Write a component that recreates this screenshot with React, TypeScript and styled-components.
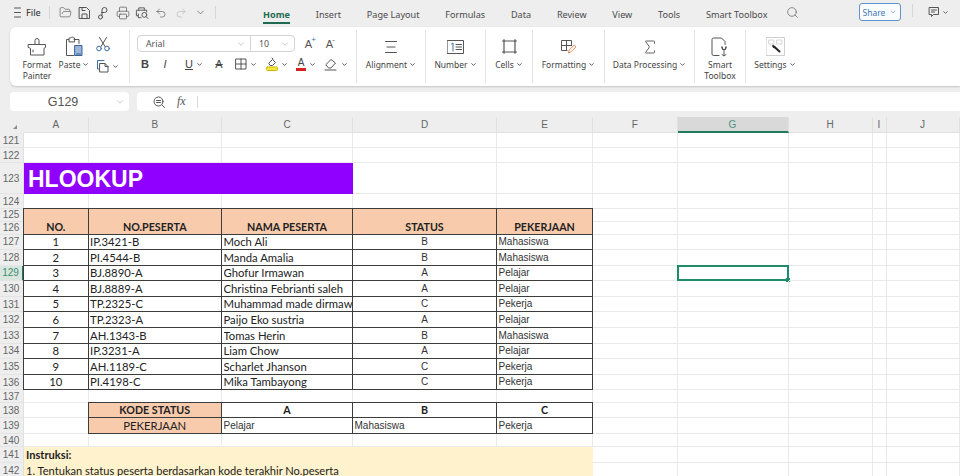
import React from "react";
import styled, { createGlobalStyle } from "styled-components";
import { ChevronDown, FolderOpen, Printer, Search, Sigma, Undo2, Redo2 } from "lucide-react";

const UI_FONT = `"Noto Sans", "Open Sans", sans-serif`;
const GRID_LINE = "#e9e9e9";
const DARK_LINE = "#3c3c3c";

const Global = createGlobalStyle`
  html, body { margin: 0; padding: 0; height: 476px; overflow: hidden; background: #eeeeee; }
  * { box-sizing: border-box; }
`;

const Page = styled.div`
  width: 960px;
  height: 476px;
  overflow: hidden;
  display: flex;
  flex-direction: column;
  font-family: ${UI_FONT};
  color: #444;
`;

/* ---------- top bar ---------- */
const TopBar = styled.div`
  height: 27px;
  flex: none;
  display: flex;
  align-items: center;
  padding-left: 14px;
`;

const FileBtn = styled.div`
  display: flex;
  align-items: center;
  gap: 5px;
  width: 35px;
  font-size: 9px;
  font-weight: 500;
  margin-bottom: 3px;
`;

const VLine = styled.span<{ $gap: number }>`
  width: 1px;
  height: 13px;
  margin: 0 ${(p) => p.$gap}px 3px;
  background: #d6d6d6;
  flex: none;
`;

const QuickIcons = styled.div`
  display: flex;
  align-items: center;
  gap: 5.3px;
  margin: 0 0 2px 8px;
  color: #555;
`;

const QuickSlot = styled.span<{ $faint?: boolean }>`
  display: flex;
  width: 14px;
  justify-content: center;
  color: ${(p) => (p.$faint ? "#b5b5b5" : "#555")};
`;

const Tabs = styled.div`
  display: flex;
  align-items: center;
  height: 27px;
  margin-left: 39px;
  gap: 25.8px;
`;

const Tab = styled.div<{ $active?: boolean }>`
  font-size: 9.1px;
  line-height: 21px;
  height: 20px;
  white-space: nowrap;
  color: ${(p) => (p.$active ? "#1e6b52" : "#4a4a4a")};
  font-weight: ${(p) => (p.$active ? 700 : 400)};
  border-bottom: ${(p) => (p.$active ? "2px solid #1e6b52" : "2px solid transparent")};
`;

const SearchSlot = styled.span`
  display: flex;
  margin: 0 0 3px -7px;
  color: #555;
`;

const TopRight = styled.div`
  margin-left: auto;
  display: flex;
  align-items: center;
  margin-bottom: 3px;
`;

const ShareBtn = styled.div`
  width: 42px;
  height: 18px;
  border: 1px solid #5f93c9;
  border-radius: 3px;
  background: #fbfcfe;
  color: #3d78b5;
  font-size: 8.5px;
  display: flex;
  align-items: center;
  justify-content: center;
  gap: 4px;
`;

const CommentBtn = styled.div`
  display: flex;
  align-items: center;
  gap: 2px;
  width: 36px;
  padding-left: 4px;
  color: #555;
`;

/* ---------- ribbon ---------- */
const Ribbon = styled.div`
  height: 59px;
  flex: none;
  margin-left: 10px;
  padding: 3px 0;
  background: #fff;
  border-radius: 6px 0 0 6px;
  box-shadow: 0 1px 2px rgba(0, 0, 0, 0.18);
  display: flex;
`;

const Group = styled.div<{ $w: number; $last?: boolean; $pad?: number }>`
  width: ${(p) => p.$w}px;
  flex: none;
  display: flex;
  position: relative;
  padding-left: ${(p) => p.$pad || 0}px;
  border-right: ${(p) => (p.$last ? "none" : "1px solid #e4e4e4")};
`;

const BigTool = styled.div<{ $w?: number }>`
  width: ${(p) => (p.$w ? `${p.$w}px` : "100%")};
  display: flex;
  flex-direction: column;
  align-items: center;
  padding-top: 5px;
  flex: none;
`;

const IconBox = styled.div`
  height: 23px;
  display: flex;
  align-items: center;
  justify-content: center;
`;

const Label = styled.div`
  font-size: 8.5px;
  line-height: 11px;
  margin-top: 1px;
  text-align: center;
  white-space: nowrap;
  color: #3f3f3f;
  display: flex;
  flex-direction: column;
  align-items: center;
`;

const LabelLine = styled.span`
  display: flex;
  align-items: center;
  height: 11px;
`;

const Caret = styled.span`
  display: flex;
  margin-left: 2px;
  color: #444;
`;

const SmallStack = styled.div`
  display: flex;
  flex-direction: column;
  align-items: flex-start;
  padding-top: 7px;
`;

const CutSlot = styled.span`
  display: flex;
  margin-left: 10px;
`;

const CopySlot = styled.span`
  display: flex;
  align-items: center;
  margin: 7px 0 0 10px;
`;

const FontPanel = styled.div`
  display: flex;
  flex-direction: column;
  padding: 5px 0 0 7px;
`;

const FontTop = styled.div`
  display: flex;
  align-items: center;
`;

const FontBox = styled.div`
  width: 158px;
  height: 17px;
  border: 1px solid #d4d4d4;
  border-radius: 4px;
  display: flex;
  font-size: 8.8px;
  color: #444;
`;

const FontField = styled.div<{ $w: number; $divide?: boolean }>`
  width: ${(p) => p.$w}px;
  display: flex;
  align-items: center;
  justify-content: space-between;
  padding: 0 4px 0 8px;
  border-right: ${(p) => (p.$divide ? "1px solid #d4d4d4" : "none")};
  color: #555;
`;

const SizeBtn = styled.span<{ $first?: boolean }>`
  font-family: "Liberation Sans", sans-serif;
  font-size: 11px;
  width: 21px;
  margin-left: ${(p) => (p.$first ? "3px" : "0")};
  text-align: center;
  color: #555;
  position: relative;
`;

const SizeMark = styled.sup<{ $blue?: boolean }>`
  position: absolute;
  top: -3px;
  margin-left: -1px;
  font-size: 8px;
  line-height: 10px;
  color: ${(p) => (p.$blue ? "#3a6ea5" : "#555")};
`;

const FormatRow = styled.div`
  display: flex;
  align-items: center;
  height: 18px;
  margin-top: 3px;
`;

const FormatTool = styled.div<{ $w: number }>`
  width: ${(p) => p.$w}px;
  flex: none;
  display: flex;
  align-items: center;
  justify-content: center;
  gap: 3px;
  color: #444;
`;

const FormatLetter = styled.span<{ $kind?: "bold" | "italic" | "under" | "strike" }>`
  font-family: "Liberation Sans", sans-serif;
  font-size: 11px;
  line-height: 13px;
  color: #444;
  font-weight: ${(p) => (p.$kind === "bold" ? 700 : 400)};
  font-style: ${(p) => (p.$kind === "italic" ? "italic" : "normal")};
  text-decoration: ${(p) => (p.$kind === "under" ? "underline" : p.$kind === "strike" ? "line-through" : "none")};
`;

const ColorLetter = styled.span<{ $color: string }>`
  font-family: "Liberation Sans", sans-serif;
  font-size: 10px;
  line-height: 10px;
  color: #444;
  border-bottom: 3px solid ${(p) => p.$color};
  padding: 0 1.5px;
`;

/* ---------- formula bar ---------- */
const FormulaRow = styled.div`
  height: 19px;
  flex: none;
  margin: 6px 0 6px 10px;
  display: flex;
  gap: 8px;
`;

const NameBox = styled.div`
  width: 119px;
  background: #fff;
  border-radius: 4px;
  display: flex;
  align-items: center;
  justify-content: center;
  position: relative;
  font-family: "Liberation Sans", sans-serif;
  font-size: 12.5px;
  color: #555;
  padding-right: 13px;
`;

const NameCaret = styled.span`
  position: absolute;
  right: 4px;
  top: 5px;
  display: flex;
  color: #888;
`;

const FormulaBox = styled.div`
  flex: 1;
  background: #fff;
  border-radius: 4px 0 0 4px;
  display: flex;
  align-items: center;
  padding-left: 16px;
  gap: 12px;
  color: #666;
`;

const Fx = styled.span`
  font-family: "Liberation Serif", serif;
  font-style: italic;
  font-size: 12px;
  width: 14px;
  color: #555;
`;

const FormulaDivider = styled.span`
  width: 1px;
  height: 12px;
  background: #d8d8d8;
  margin-left: -6px;
`;

/* ---------- sheet ---------- */
const Sheet = styled.div`
  flex: 1;
  min-height: 0;
  display: grid;
  grid-template-columns: 24px 64.5px 133.5px 131px 144px 96px 84.5px 111px 84px 14px 73px;
  grid-template-rows: 16px repeat(22, auto);
  align-content: start;
  background: #fff;
`;

const Corner = styled.div`
  background: #eeeeee;
  position: relative;
  &::after {
    content: "";
    position: absolute;
    right: 7px;
    bottom: 4px;
    border-left: 4px solid transparent;
    border-bottom: 4px solid #888;
  }
`;

const ColHead = styled.div<{ $active?: boolean }>`
  background: ${(p) => (p.$active ? "#d9d9d9" : "#eeeeee")};
  color: ${(p) => (p.$active ? "#4f9378" : "#666")};
  font-family: "Liberation Sans", sans-serif;
  font-size: 10px;
  display: flex;
  align-items: center;
  justify-content: center;
  border-right: 1px solid #e0e0e0;
  border-bottom: ${(p) => (p.$active ? "2px solid #217a5b" : "1px solid #e0e0e0")};
`;

const RowHead = styled.div<{ $h: number; $active?: boolean }>`
  height: ${(p) => p.$h}px;
  background: ${(p) => (p.$active ? "#d9e6e0" : "#eeeeee")};
  color: ${(p) => (p.$active ? "#3b8f6f" : "#666")};
  font-family: "Liberation Sans", sans-serif;
  font-size: 10px;
  display: flex;
  align-items: center;
  justify-content: center;
  padding-right: 1px;
  border-bottom: 1px solid #e4e4e4;
  border-right: ${(p) => (p.$active ? "2px solid #217a5b" : "1px solid #e0e0e0")};
`;

const Cell = styled.div<{
  $span?: number;
  $rows?: number;
  $fill?: string;
  $box?: boolean;
  $bold?: boolean;
  $center?: boolean;
  $arial?: boolean;
}>`
  grid-column: span ${(p) => p.$span || 1};
  grid-row: span ${(p) => p.$rows || 1};
  position: relative;
  min-width: 0;
  background: ${(p) => p.$fill || "transparent"};
  border-right: ${(p) => (p.$box ? "none" : `1px solid ${GRID_LINE}`)};
  border-bottom: ${(p) => (p.$box ? "none" : `1px solid ${GRID_LINE}`)};
  display: flex;
  align-items: flex-end;
  justify-content: ${(p) => (p.$center ? "center" : "flex-start")};
  padding: 0 ${(p) => (p.$center ? "1px" : "0")} 1px ${(p) => (p.$center ? "0" : "1.5px")};
  white-space: nowrap;
  font-family: ${(p) => (p.$arial ? `"Liberation Sans", sans-serif` : `Lato, "Open Sans", sans-serif`)};
  font-size: ${(p) => (p.$arial ? "10px" : p.$bold ? "10.7px" : "11.3px")};
  line-height: 14px;
  font-weight: ${(p) => (p.$bold ? 700 : 400)};
  color: ${(p) => (p.$arial ? "#333" : "#222")};
  &::after {
    content: "";
    display: ${(p) => (p.$box ? "block" : "none")};
    position: absolute;
    inset: -1px 0 0 -1px;
    border: 1px solid ${DARK_LINE};
    pointer-events: none;
  }
`;

const Clip = styled.span`
  display: block;
  overflow: hidden;
  width: 100%;
`;

const TitleCell = styled.div`
  grid-column: span 3;
  background: #9000ff;
  color: #fff;
  font-family: "Liberation Sans", sans-serif;
  font-weight: 700;
  font-size: 23px;
  display: flex;
  align-items: center;
  padding: 2px 0 0 4px;
`;

const NoteCell = styled.div<{ $bold?: boolean }>`
  grid-column: span 5;
  background: #fff2cc;
  font-family: Lato, "Open Sans", sans-serif;
  font-size: 11.1px;
  line-height: 14px;
  font-weight: ${(p) => (p.$bold ? 700 : 400)};
  color: #222;
  padding: 1px 0 0 2px;
  display: flex;
  align-items: center;
  white-space: nowrap;
`;

const SelectedCell = styled.div`
  position: relative;
  border-right: 1px solid ${GRID_LINE};
  border-bottom: 1px solid ${GRID_LINE};
  &::before {
    content: "";
    position: absolute;
    inset: -1px -1px -1px -1px;
    border: 2px solid #1e8c68;
  }
  &::after {
    content: "";
    position: absolute;
    right: -2px;
    bottom: -2px;
    width: 4px;
    height: 4px;
    background: #1e8c68;
  }
`;

/* ---------- icons ---------- */
const Svg = styled.svg`
  display: block;
  fill: none;
  stroke: currentColor;
  stroke-width: 1;
  stroke-linecap: round;
  stroke-linejoin: round;
  color: #555;
`;

const Chev = ({ s = 7 }: { s?: number }) => <ChevronDown size={s} strokeWidth={3} />;

const QuickSave = () => (
  <Svg width="13" height="14" viewBox="0 0 13 14">
    <path d="M1.5 1.5h7l3 3v8h-10z" />
    <path d="M4 12.5V8h5v4.5M4 1.5v3h3" />
  </Svg>
);
const QuickPdf = () => (
  <Svg width="13" height="14" viewBox="0 0 13 14">
    <path d="M5 6.5V4a2.5 2.5 0 1 1 2.5 2.5H5zM5 6.5v3" />
    <circle cx="3.5" cy="11" r="2" />
  </Svg>
);
const QuickPreview = () => (
  <Svg width="15" height="14" viewBox="0 0 15 14">
    <path d="M4 4V1.5h6V4M3.5 10H1.5V4h11v2" />
    <path d="M3.5 8v4h3" />
    <circle cx="10" cy="9" r="2.6" />
    <path d="M12 11l2 2" />
  </Svg>
);
const Hamburger = () => (
  <Svg width="7" height="11" viewBox="0 0 7 11">
    <path d="M0.5 1h6M0.5 5.5h6M0.5 10h6" />
  </Svg>
);
const CommentIcon = () => (
  <Svg width="12" height="12" viewBox="0 0 12 12">
    <path d="M1.5 1.5h9v7h-5l-2 2v-2h-2z" />
    <path d="M3.5 4h5M3.5 6h3" />
  </Svg>
);
const PainterIcon = () => (
  <Svg width="20" height="20" viewBox="0 0 20 20">
    <path d="M8 7V3.5a2 2 0 0 1 4 0V7" />
    <path d="M1.5 7.5h17v3l-1.5 .8V18H3.5v-6.7l-2-.8z" />
    <path d="M6 13v2" />
  </Svg>
);
const PasteIcon = () => (
  <Svg width="20" height="21" viewBox="0 0 20 21">
    <path d="M10 3.5H15v4M4.5 3.5H2.5v16H10" />
    <path d="M5 5.5V2h1.8a1.5 1.5 0 0 1 2.8 0h1v3.5z" />
    <rect x="11" y="9.5" width="7" height="10" fill="#9db6d8" stroke="#3a6299" />
    <path d="M12.5 18h4" stroke="#3a6299" />
  </Svg>
);
const CutIcon = () => (
  <Svg width="14" height="15" viewBox="0 0 14 15">
    <path d="M3.5 0.5L9 9.5M10.5 0.5L5 9.5" />
    <circle cx="3" cy="11.5" r="2.3" stroke="#3a6ea5" />
    <circle cx="11" cy="11.5" r="2.3" stroke="#3a6ea5" />
  </Svg>
);
const CopyIcon = () => (
  <Svg width="14" height="14" viewBox="0 0 14 14">
    <path d="M8 1.5H1.5V10h2" stroke="#3a6ea5" />
    <path d="M4 4.5h5l3 3v5.5H4z" />
    <path d="M9 4.5v3h3" />
  </Svg>
);
const BorderIcon = () => (
  <Svg width="12" height="12" viewBox="0 0 12 12">
    <rect x="1" y="1" width="10" height="10" />
    <path d="M6 1v10M1 6h10" />
  </Svg>
);
const EraserIcon = () => (
  <Svg width="14" height="13" viewBox="0 0 14 13">
    <path d="M2 6.5L7 1.5l4.5 3.5-4.5 5H5z" />
    <path d="M1 12h11" />
  </Svg>
);
const BucketLetter = () => (
  <Svg width="12" height="14" viewBox="0 0 12 14">
    <path d="M3 6L6.5 2.5 9.5 5.5 6.5 8.5H4.5z" />
    <path d="M6 1l1 1" />
    <rect x="0.5" y="10" width="11" height="3.5" rx="1" fill="#f5e642" stroke="#c7b900" />
  </Svg>
);
const AlignIcon = () => (
  <Svg width="14" height="14" viewBox="0 0 14 14">
    <path d="M1.5 1.5h11M3 7h8M1.5 12.5h11" />
  </Svg>
);
const NumberIcon = () => (
  <Svg width="17" height="14" viewBox="0 0 17 14">
    <rect x="0.5" y="0.5" width="16" height="13" />
    <path d="M9 4.5h5.5M9 7h5.5M9 9.5h5.5" />
    <path d="M4.5 4L6 3v8" stroke="#3a6ea5" />
  </Svg>
);
const CellsIcon = () => (
  <Svg width="15" height="15" viewBox="0 0 15 15">
    <rect x="2" y="2" width="11" height="11" strokeWidth="1.2" />
    <path d="M2 0.5v1.5M13 0.5v1.5M0.5 2H2M13 2h1.5M0.5 13H2M13 13h1.5M2 13v1.5M13 13v1.5" />
  </Svg>
);
const FormattingIcon = () => (
  <Svg width="17" height="15" viewBox="0 0 17 15">
    <path d="M7 11.5H1.5v-10h10v5M1.5 6.5h10M6.5 1.5v10" />
    <path d="M8.5 13.5l.7-2.5 5-5 1.8 1.8-5 5z" stroke="#d98a5c" />
  </Svg>
);
const SmartIcon = () => (
  <Svg width="18" height="20" viewBox="0 0 18 20">
    <path d="M8 18.5H2.5a1.5 1.5 0 0 1-1.5-1.5V2.5A1.5 1.5 0 0 1 2.5 1h8l3.5 3.5v3" />
    <path d="M11.5 10v2.5h3V10M13 12.5v6M11 17.5l2 1.5 2-1.5" />
    <path d="M10.5 10a2.5 2.5 0 0 0 5 0" />
  </Svg>
);
const SettingsIcon = () => (
  <Svg width="19" height="19" viewBox="0 0 19 19">
    <rect x="0.5" y="0.5" width="18" height="18" stroke="#cfcfcf" />
    <rect x="3" y="3" width="5" height="4" stroke="#d6d6d6" />
    <rect x="11" y="3" width="5" height="4" stroke="#d6d6d6" />
    <path d="M8 9.5l5.5 5" stroke="#222" strokeWidth="2" />
    <path d="M7 8.5a1.7 1.7 0 0 0 2 2" stroke="#222" strokeWidth="1.6" />
  </Svg>
);
const ZoomIcon = () => (
  <Svg width="12" height="12" viewBox="0 0 12 12">
    <circle cx="5.5" cy="5.5" r="4.5" />
    <path d="M9 9l2.5 2.5M3.5 4.5h4M3.5 6.5h4" />
  </Svg>
);

/* ---------- data ---------- */
const columns = ["A", "B", "C", "D", "E", "F", "G", "H", "I", "J"];

const people = [
  ["1", "IP.3421-B", "Moch Ali", "B", "Mahasiswa"],
  ["2", "PI.4544-B", "Manda Amalia", "B", "Mahasiswa"],
  ["3", "BJ.8890-A", "Ghofur Irmawan", "A", "Pelajar"],
  ["4", "BJ.8889-A", "Christina Febrianti saleh", "A", "Pelajar"],
  ["5", "TP.2325-C", "Muhammad made dirmawan", "C", "Pekerja"],
  ["6", "TP.2323-A", "Paijo Eko sustria", "A", "Pelajar"],
  ["7", "AH.1343-B", "Tomas Herin", "B", "Mahasiswa"],
  ["8", "IP.3231-A", "Liam Chow", "A", "Pelajar"],
  ["9", "AH.1189-C", "Scharlet Jhanson", "C", "Pekerja"],
  ["10", "PI.4198-C", "Mika Tambayong", "C", "Pekerja"],
];

const PEACH = "#f8cbad";
const headers = ["NO.", "NO.PESERTA", "NAMA PESERTA", "STATUS", "PEKERJAAN"];
const tabs = ["Insert", "Page Layout", "Formulas", "Data", "Review", "View", "Tools", "Smart Toolbox"];

const blanks = (n: number) => Array.from({ length: n }, (_, i) => <Cell key={`b${i}`} />);

const App: React.FC = () => {
  return (
    <Page>
      <Global />
      <TopBar>
        <FileBtn>
          <Hamburger />
          File
        </FileBtn>
        <VLine $gap={0} />
        <QuickIcons>
          <QuickSlot><FolderOpen size={13} strokeWidth={1.2} /></QuickSlot>
          <QuickSlot><QuickSave /></QuickSlot>
          <QuickSlot><QuickPdf /></QuickSlot>
          <QuickSlot><Printer size={14} strokeWidth={1.2} /></QuickSlot>
          <QuickSlot><QuickPreview /></QuickSlot>
          <QuickSlot><Undo2 size={12} strokeWidth={1.3} /></QuickSlot>
          <QuickSlot $faint><Redo2 size={12} strokeWidth={1.3} /></QuickSlot>
          <QuickSlot><ChevronDown size={11} strokeWidth={1.5} /></QuickSlot>
        </QuickIcons>
        <VLine $gap={8} />
        <Tabs>
          <Tab $active>Home</Tab>
          {tabs.map((t) => (
            <Tab key={t}>{t}</Tab>
          ))}
          <SearchSlot><Search size={13} strokeWidth={1.2} /></SearchSlot>
        </Tabs>
        <TopRight>
          <ShareBtn>
            Share <ChevronDown size={8} strokeWidth={1.6} />
          </ShareBtn>
          <VLine $gap={11} />
          <CommentBtn>
            <CommentIcon />
            <Chev />
          </CommentBtn>
        </TopRight>
      </TopBar>

      <Ribbon>
        <Group $w={120} $pad={2}>
          <BigTool $w={50}>
            <IconBox><PainterIcon /></IconBox>
            <Label><LabelLine>Format</LabelLine><LabelLine>Painter</LabelLine></Label>
          </BigTool>
          <BigTool $w={24}>
            <IconBox><PasteIcon /></IconBox>
            <Label><LabelLine>Paste<Caret><Chev /></Caret></LabelLine></Label>
          </BigTool>
          <SmallStack>
            <CutSlot><CutIcon /></CutSlot>
            <CopySlot>
              <CopyIcon />
              <Caret><Chev /></Caret>
            </CopySlot>
          </SmallStack>
        </Group>

        <Group $w={227}>
          <FontPanel>
            <FontTop>
              <FontBox>
                <FontField $w={113} $divide>Arial <ChevronDown size={10} strokeWidth={1} color="#777" /></FontField>
                <FontField $w={43}>10 <ChevronDown size={10} strokeWidth={1} color="#777" /></FontField>
              </FontBox>
              <SizeBtn $first>A<SizeMark $blue>+</SizeMark></SizeBtn>
              <SizeBtn>A<SizeMark>-</SizeMark></SizeBtn>
            </FontTop>
            <FormatRow>
              <FormatTool $w={16}><FormatLetter $kind="bold">B</FormatLetter></FormatTool>
              <FormatTool $w={24}><FormatLetter $kind="italic">I</FormatLetter></FormatTool>
              <FormatTool $w={34}><FormatLetter $kind="under">U</FormatLetter><Chev /></FormatTool>
              <FormatTool $w={16}><FormatLetter $kind="strike">A</FormatLetter></FormatTool>
              <FormatTool $w={38}><BorderIcon /><Chev /></FormatTool>
              <FormatTool $w={24}><BucketLetter /><Chev /></FormatTool>
              <FormatTool $w={34}><ColorLetter $color="#d92020">A</ColorLetter><Chev /></FormatTool>
              <FormatTool $w={26}><EraserIcon /><Chev /></FormatTool>
            </FormatRow>
          </FontPanel>
        </Group>

        <Group $w={69}>
          <BigTool>
            <IconBox><AlignIcon /></IconBox>
            <Label><LabelLine>Alignment<Caret><Chev /></Caret></LabelLine></Label>
          </BigTool>
        </Group>
        <Group $w={60}>
          <BigTool>
            <IconBox><NumberIcon /></IconBox>
            <Label><LabelLine>Number<Caret><Chev /></Caret></LabelLine></Label>
          </BigTool>
        </Group>
        <Group $w={47}>
          <BigTool>
            <IconBox><CellsIcon /></IconBox>
            <Label><LabelLine>Cells<Caret><Chev /></Caret></LabelLine></Label>
          </BigTool>
        </Group>
        <Group $w={72}>
          <BigTool>
            <IconBox><FormattingIcon /></IconBox>
            <Label><LabelLine>Formatting<Caret><Chev /></Caret></LabelLine></Label>
          </BigTool>
        </Group>
        <Group $w={90}>
          <BigTool>
            <IconBox><Sigma size={18} strokeWidth={1.1} color="#444" /></IconBox>
            <Label><LabelLine>Data Processing<Caret><Chev /></Caret></LabelLine></Label>
          </BigTool>
        </Group>
        <Group $w={51}>
          <BigTool>
            <IconBox><SmartIcon /></IconBox>
            <Label><LabelLine>Smart</LabelLine><LabelLine>Toolbox</LabelLine></Label>
          </BigTool>
        </Group>
        <Group $w={58} $last>
          <BigTool>
            <IconBox><SettingsIcon /></IconBox>
            <Label><LabelLine>Settings<Caret><Chev /></Caret></LabelLine></Label>
          </BigTool>
        </Group>
      </Ribbon>

      <FormulaRow>
        <NameBox>
          G129
          <NameCaret><ChevronDown size={10} strokeWidth={1} /></NameCaret>
        </NameBox>
        <FormulaBox>
          <ZoomIcon />
          <Fx>fx</Fx>
          <FormulaDivider />
        </FormulaBox>
      </FormulaRow>

      <Sheet>
        <Corner />
        {columns.map((c) => (
          <ColHead key={c} $active={c === "G"}>{c}</ColHead>
        ))}

        <RowHead $h={15}>121</RowHead>{blanks(10)}
        <RowHead $h={15}>122</RowHead>{blanks(10)}

        <RowHead $h={31}>123</RowHead>
        <TitleCell>HLOOKUP</TitleCell>
        {blanks(7)}

        <RowHead $h={15}>124</RowHead>{blanks(10)}

        <RowHead $h={12.5}>125</RowHead>
        {headers.map((h) => (
          <Cell key={h} $rows={2} $fill={PEACH} $box $bold $center>{h}</Cell>
        ))}
        {blanks(5)}
        <RowHead $h={13}>126</RowHead>
        {blanks(5)}

        {people.map((p, i) => {
          const n = 127 + i;
          return (
            <React.Fragment key={n}>
              <RowHead $h={15.6} $active={n === 129}>{n}</RowHead>
              <Cell $box $center>{p[0]}</Cell>
              <Cell $box>{p[1]}</Cell>
              <Cell $box><Clip>{p[2]}</Clip></Cell>
              <Cell $box $arial $center>{p[3]}</Cell>
              <Cell $box $arial>{p[4]}</Cell>
              <Cell />
              {n === 129 ? <SelectedCell /> : <Cell />}
              {blanks(3)}
            </React.Fragment>
          );
        })}

        <RowHead $h={12.5}>137</RowHead>{blanks(10)}

        <RowHead $h={15.5}>138</RowHead>
        <Cell />
        <Cell $box $fill={PEACH} $bold $center>KODE STATUS</Cell>
        <Cell $box $bold $center>A</Cell>
        <Cell $box $bold $center>B</Cell>
        <Cell $box $bold $center>C</Cell>
        {blanks(5)}

        <RowHead $h={16}>139</RowHead>
        <Cell />
        <Cell $box $fill={PEACH} $center>PEKERJAAN</Cell>
        <Cell $box $arial>Pelajar</Cell>
        <Cell $box $arial>Mahasiswa</Cell>
        <Cell $box $arial>Pekerja</Cell>
        {blanks(5)}

        <RowHead $h={12.5}>140</RowHead>{blanks(10)}

        <RowHead $h={16}>141</RowHead>
        <NoteCell $bold>Instruksi:</NoteCell>
        {blanks(5)}

        <RowHead $h={15.5}>142</RowHead>
        <NoteCell>1. Tentukan status peserta berdasarkan kode terakhir No.peserta</NoteCell>
        {blanks(5)}
      </Sheet>
    </Page>
  );
};

export default App;
